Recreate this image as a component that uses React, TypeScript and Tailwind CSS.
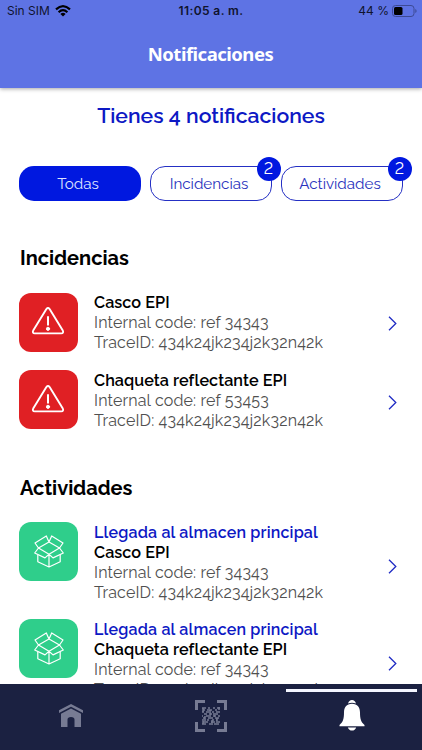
import type { ReactNode } from "react";

function WarningIcon() {
  return (
    <svg width="34" height="30" viewBox="0 0 34 30" fill="none" stroke="white" strokeWidth="1.9" strokeLinecap="round" strokeLinejoin="round">
      <path d="M15.4 3 2.2 24.6Q1 27.2 3.8 27.4H30.2Q33 27.2 31.8 24.6L18.6 3Q17 1 15.4 3Z" />
      <path d="M17 10.2V19.6" strokeWidth="2" strokeLinecap="butt" />
      <circle cx="17" cy="22.8" r="1.6" fill="white" strokeWidth="1" />
    </svg>
  );
}

function BoxIcon() {
  return (
    <svg width="30" height="33" viewBox="0 0 30 33" fill="none" stroke="white" strokeWidth="1.2" strokeLinejoin="round">
      <path d="M15 7 12.3 .9 1 8 4.5 13 15 7 17.7 .9 29 8 25.5 13Z" />
      <path d="M4.5 13 15 19.3 25.5 13 29.3 18 19 22.9 15 19.3 11 22.9.7 18Z" />
      <path d="M3.8 19.7V26.7L15 32 26.2 26.7V19.7M15 19.3V32" />
    </svg>
  );
}

function ScanIcon() {
  return (
    <svg width="32" height="32" viewBox="0 0 32 32" fill="none" stroke="#777b93">
      <path d="M1.5 10V1.5H10M22 1.5H30.5V10M30.5 22V30.5H22M10 30.5H1.5V22" strokeWidth="3" />
      <g strokeWidth="1.5">
        <path d="M7 8H11M13 8H15M18 8H20M22 8H25M8 10H10M12 10H17M20 10H22M7 12H9M11 12H14M17 12H19M21 12H25" />
        <path d="M9 14H12M15 14H17M20 14H23M7 16H8M11 16H16M19 16H21M23 16H25M8 18H10M13 18H18M20 18H24" />
        <path d="M7 20H9M12 20H14M17 20H19M21 20H22M8 22H13M16 22H20M23 22H25M7 24H11M14 24H16M19 24H24" />
        <path d="M8 8V12M24 7V10M15 10V15M19 13V17M10 16V21M22 18V23M17 20V25M8 21V24" />
      </g>
    </svg>
  );
}

function Chevron() {
  return (
    <svg width="9" height="15" viewBox="0 0 9 15" fill="none" stroke="#1f2bc4" strokeWidth="1.3">
      <path d="M1 .8 7.8 7.5 1 14.2" />
    </svg>
  );
}

function Tab({ label, count, active }: { label: string; count?: number; active?: boolean }) {
  return (
    <div
      className={
        active
          ? "relative flex h-[35px] w-[122px] items-center justify-center rounded-[15px] bg-[#0018e0] text-[#dfe3ff]"
          : "relative flex h-[35px] w-[122px] items-center justify-center rounded-[15px] border-[1.5px] border-[#2530c4] text-[#2933bd]"
      }
    >
      <span className="pr-1 pt-px text-[15.2px]">{label}</span>
      {count && (
        <span className="absolute -right-[10px] -top-[10px] flex size-6 items-center justify-center rounded-full bg-[#0018e0] pr-px text-[16px] text-white [font-feature-settings:'lnum']">
          {count}
        </span>
      )}
    </div>
  );
}

type RowProps = {
  icon: ReactNode;
  color: string;
  event?: string;
  title: string;
  code: string;
  textClass: string;
  chevronClass: string;
};

function Row({ icon, color, event, title, code, textClass, chevronClass }: RowProps) {
  return (
    <div className="flex items-start pl-[19px] pr-[25px]">
      <div className={`flex h-[59px] w-[59px] shrink-0 items-center justify-center rounded-[12px] ${color}`}>{icon}</div>
      <div className={`ml-4 flex-1 whitespace-nowrap text-[16px] leading-5 text-[#505050] ${textClass}`}>
        {event && <p className="font-semibold tracking-[0.18px] text-[#0d18c4]">{event}</p>}
        <p className="text-[16.2px] font-semibold tracking-[0.06px] text-black">{title}</p>
        <p className="tracking-[0.16px]">Internal code: ref {code}</p>
        <p className="tracking-[0.16px]">TraceID: 434k24jk234j2k32n42k</p>
      </div>
      <div className={chevronClass}>
        <Chevron />
      </div>
    </div>
  );
}

export default function App() {
  return (
    <div className="flex h-[750px] w-[422px] flex-col overflow-hidden bg-white font-['Raleway','Lato',sans-serif] [font-feature-settings:'onum']">
      {/* Header */}
      <header className="relative h-[88px] shrink-0 bg-[#5e73e4] shadow-[0_1px_4px_rgba(0,0,0,0.35)]">
        <div className="grid h-[22px] grid-cols-3 items-center pl-[7px] pr-[5px] font-['Inter',sans-serif] text-[12px] text-[#10132e]">
          <div className="flex items-center gap-[5px]">
            <span>Sin SIM</span>
            <svg width="16" height="12" viewBox="0 0 16 12" fill="none" stroke="black" strokeWidth="2.2">
              <path d="M1 4.4Q8-2 15 4.4M3.6 7.2Q8 3.2 12.4 7.2" />
              <path d="M8 11.5 5.4 8.9Q8 6.8 10.6 8.9Z" fill="black" stroke="none" />
            </svg>
          </div>
          <span className="pr-[2px] text-center font-semibold tracking-[0.4px]">11:05 a. m.</span>
          <div className="flex items-center justify-end gap-[3px]">
            <span>44 %</span>
            <svg width="25" height="12" viewBox="0 0 25 12" fill="none">
              <rect x=".5" y=".5" width="21.5" height="11" rx="3" stroke="#3d4a94" />
              <rect x="2" y="2" width="8.5" height="8" rx="1.5" fill="black" />
              <path d="M23.3 4V8Q24.6 7.5 24.6 6T23.3 4" fill="#3d4a94" />
            </svg>
          </div>
        </div>
        <h1 className="mt-[18px] pr-px text-center font-['Noto_Sans','Open_Sans',sans-serif] text-[18.5px] font-bold leading-7 tracking-[-0.5px] text-white">
          Notificaciones
        </h1>
      </header>

      {/* Notifications */}
      <main className="min-h-0 flex-1 overflow-hidden">
        <h2 className="mt-[14px] text-center text-[21.2px] font-[650] leading-7 text-[#0d18c4]">Tienes 4 notificaciones</h2>
        <div className="mt-[36px] flex gap-[9px] pl-[19px]">
          <Tab label="Todas" active />
          <Tab label="Incidencias" count={2} />
          <Tab label="Actividades" count={2} />
        </div>

        <h3 className="mt-[43px] pl-5 text-[20px] font-bold leading-7">Incidencias</h3>
        <div className="mt-[21px] flex flex-col gap-[17px]">
          <Row icon={<WarningIcon />} color="bg-[#e02024] pb-1 pr-[2px]" title="Casco EPI" code="34343" textClass="" chevronClass="pt-[23px]" />
          <Row icon={<WarningIcon />} color="bg-[#e02024] pb-[2px] pr-[2px]" title="Chaqueta reflectante EPI" code="53453" textClass="pt-px" chevronClass="pt-[25px]" />
        </div>

        <h3 className="mt-[43px] pl-5 text-[20px] font-bold leading-7">Actividades</h3>
        <div className="mt-[20px] flex flex-col gap-4">
          <Row icon={<BoxIcon />} color="bg-[#2fce8b]" event="Llegada al almacen principal" title="Casco EPI" code="34343" textClass="pt-px" chevronClass="pt-[37px]" />
          <Row icon={<BoxIcon />} color="bg-[#2fce8b]" event="Llegada al almacen principal" title="Chaqueta reflectante EPI" code="34343" textClass="pt-px" chevronClass="pt-[37px]" />
        </div>
      </main>

      {/* Bottom navigation */}
      <nav className="relative flex h-[66px] shrink-0 bg-[#1b2141]">
        <div className="flex w-[141px] justify-center pt-5">
          <svg width="24" height="24" viewBox="0 0 24 24" fill="#777b93">
            <path d="M0 6.2 12 0 24 6.2V9L12 2.8 0 9Z" />
            <path d="M2 9.8 12 4.6 22 9.8V23H15.5V15.5Q15.5 13 12 13T8.5 15.5V23H2Z" />
          </svg>
        </div>
        <div className="flex w-[140px] justify-center pt-4">
          <ScanIcon />
        </div>
        <div className="flex w-[141px] justify-center pt-4">
          <svg width="26" height="31" viewBox="0 0 26 31" fill="white">
            <path d="M9 3.6Q10 0 13 0T17 3.6Q13 2 9 3.6Z" />
            <path d="M13 3.8C18.5 3.8 21 7.5 21 12.5 21 19 22 22 25.5 25V26.2H.5V25C4 22 5 19 5 12.5 5 7.5 7.5 3.8 13 3.8Z" />
            <path d="M8.8 27.5H17.2Q16 30.6 13 30.6T8.8 27.5Z" />
          </svg>
        </div>
        <div className="absolute left-[286px] top-[5px] h-[3px] w-[131px] bg-[#f4f6ff]" />
      </nav>
    </div>
  );
}
